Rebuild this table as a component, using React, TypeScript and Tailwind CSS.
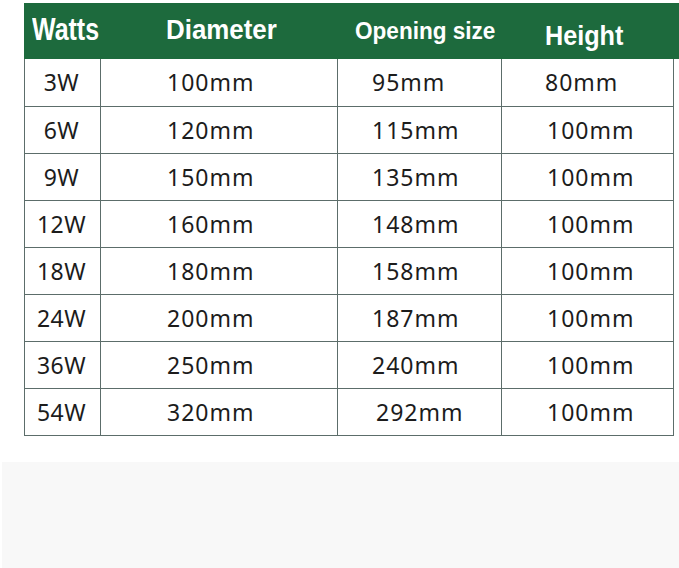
const rows = [
  ["3W", "100mm", "95mm", "80mm"],
  ["6W", "120mm", "115mm", "100mm"],
  ["9W", "150mm", "135mm", "100mm"],
  ["12W", "160mm", "148mm", "100mm"],
  ["18W", "180mm", "158mm", "100mm"],
  ["24W", "200mm", "187mm", "100mm"],
  ["36W", "250mm", "240mm", "100mm"],
  ["54W", "320mm", "292mm", "100mm"],
];

const cols = "grid grid-cols-[76px_237px_164px_173px]";

export default function App() {
  return (
    <div className="w-[679px] h-[568px] bg-white flex flex-col overflow-hidden">
      <div className="pl-[24px] pt-[3px]">
        {/* header */}
        <div
          className={`${cols} h-[56px] bg-[#1d6a3d] text-white font-bold whitespace-nowrap`}
          style={{ fontFamily: '"Liberation Sans", Arial, sans-serif' }}
        >
          <div className="flex items-center pl-[8px] pb-[5px]">
            <span className="inline-block text-[32px] leading-none origin-left scale-x-[0.78]">Watts</span>
          </div>
          <div className="flex items-center pl-[66px] pb-[3px]">
            <span className="inline-block text-[28px] leading-none origin-left scale-x-[0.925]">Diameter</span>
          </div>
          <div className="flex items-center pl-[18px] pb-[1px]">
            <span className="inline-block text-[24px] leading-none origin-left scale-x-[0.94]">Opening size</span>
          </div>
          <div className="flex items-center pl-[44px] pt-[10px]">
            <span className="inline-block text-[28px] leading-none origin-left scale-x-[0.9]">Height</span>
          </div>
        </div>

        {/* body */}
        <div
          className="w-[650px] border-l border-r border-[#5c6d6a] text-[#1c1c1c] text-[23px]"
          style={{ fontFamily: '"Noto Sans", "Noto Sans CJK SC", sans-serif' }}
        >
          {rows.map((r, i) => (
            <div key={i} className={`${cols} border-b border-[#5c6d6a] ${i === 0 ? "h-[48px]" : "h-[47px]"}`}>
              <div className="flex items-center justify-center pr-[2px] border-r border-[#5c6d6a] tracking-[0.5px]">{r[0]}</div>
              <div className="flex items-center pl-[66px] border-r border-[#5c6d6a]">
                <span className="tracking-[1px]">{r[1]}</span>
              </div>
              <div className={`flex items-center border-r border-[#5c6d6a] ${i === 7 ? "pl-[38px]" : "pl-[34px]"}`}>
                <span className="tracking-[1px]">{r[2]}</span>
              </div>
              <div className={`flex items-center ${i === 0 ? "pl-[43px]" : "pl-[45px]"}`}>
                <span className="tracking-[1px]">{r[3]}</span>
              </div>
            </div>
          ))}
        </div>
      </div>

      <div className="mt-[26px] ml-[2px] flex-1 bg-[#f8f8f8]" />
    </div>
  );
}
